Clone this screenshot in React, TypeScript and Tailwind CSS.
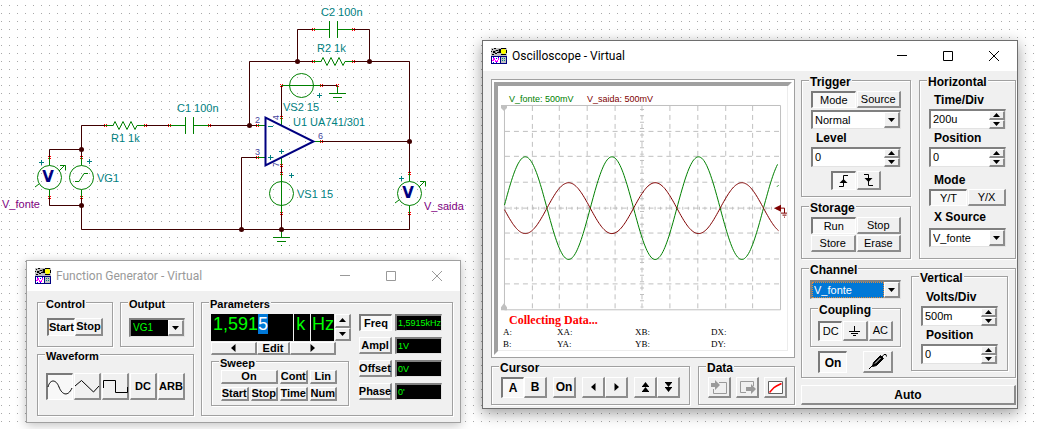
import React, { ReactNode } from 'react';

const raised =
  'bg-[#f0f0f0] border-t border-l border-r-2 border-b-2 border-t-white border-l-white border-r-[#8c8c8c] border-b-[#8c8c8c]';
const pressed =
  'bg-[#f8f8f8] border-t-2 border-l-2 border-r border-b border-t-[#7a7a7a] border-l-[#7a7a7a] border-r-white border-b-white';
const well =
  'border-t-2 border-l-2 border-r border-b border-t-[#808080] border-l-[#808080] border-r-[#e3e3e3] border-b-[#e3e3e3]';

type BtnProps = { children: ReactNode; on?: boolean; className?: string; label?: string };

function Btn({ children, on, className = '', label }: BtnProps) {
  return (
    <button
      type="button"
      aria-label={label}
      aria-pressed={on}
      className={`flex min-w-0 items-center justify-center whitespace-nowrap leading-none text-black ${on ? pressed : raised} ${className}`}
    >
      {children}
    </button>
  );
}

type GroupProps = { title: string; children: ReactNode; className?: string };

function Group({ title, children, className = '' }: GroupProps) {
  return (
    <fieldset
      className={`relative min-w-0 border border-[#a0a0a0] shadow-[1px_1px_0_#fff,inset_1px_1px_0_#fff] ${className}`}
    >
      <legend className="absolute -top-[5px] left-[7px] bg-[#f0f0f0] px-px font-bold leading-[12px]">{title}</legend>
      {children}
    </fieldset>
  );
}

function Arrow({ dir }: { dir: 'up' | 'down' | 'left' | 'right' }) {
  const d = { up: 'M0 5h7L3.5 1z', down: 'M0 1h7L3.5 5z', left: 'M5.500 0v8L1 4z', right: 'M1.500 0v8L6 4z' }[dir];
  const box = dir === 'up' || dir === 'down' ? '0 0 7 6' : '0 0 7 8';
  return (
    <svg viewBox={box} className={dir === 'up' || dir === 'down' ? 'h-[6px] w-[7px]' : 'h-[8px] w-[7px]'} aria-hidden="true">
      <path d={d} fill="#000" />
    </svg>
  );
}

function Spinner({ name }: { name: string }) {
  return (
    <div className="flex w-4 shrink-0 flex-col">
      <Btn label={`${name} up`} className="flex-1"><Arrow dir="up" /></Btn>
      <Btn label={`${name} down`} className="flex-1"><Arrow dir="down" /></Btn>
    </div>
  );
}

function NumberField({ id, value, name }: { id: string; value: string; name: string }) {
  return (
    <div className={`flex h-5 min-w-0 ${well}`}>
      <input id={id} defaultValue={value} className="w-full min-w-0 flex-1 bg-white px-[2px] text-[11px] text-black outline-none" />
      <Spinner name={name} />
    </div>
  );
}

type ComboProps = { id: string; value: string; label?: string; tone?: 'plain' | 'selected' | 'dark'; className?: string };

function Combo({ id, value, label, tone = 'plain', className = '' }: ComboProps) {
  const tones = {
    plain: 'bg-white text-[11px] text-black',
    selected: 'bg-[#0078d7] text-[11px] text-white outline-1 outline-dotted outline-[#e08a3c] -outline-offset-1',
    dark: 'bg-black text-[10px] text-[#00ff00]',
  };
  return (
    <div className={`flex h-[19px] min-w-0 ${well} ${tone === 'dark' ? 'bg-black' : 'bg-white'} ${className}`}>
      <select id={id} aria-label={label} className={`w-full min-w-0 flex-1 appearance-none px-[2px] leading-none ${tones[tone]}`}>
        <option>{value}</option>
      </select>
      <span className={`pointer-events-none flex w-4 shrink-0 items-center justify-center ${raised}`}>
        <Arrow dir="down" />
      </span>
    </div>
  );
}

function AppIcon() {
  return (
    <svg viewBox="0 0 16 16" className="h-4 w-4 shrink-0" shapeRendering="crispEdges" aria-hidden="true">
      <path fill="#c0c0c0" d="M0 0h16v8H0z" />
      <path fill="#000" d="M1 1h1v1H1zM3 0h2v1H3zM0 3h1v1H0zM2 3h2v2H2zM5 2h2v1H5zM6 4h2v1H6zM8 1h2v4H8zM4 5h2v1H4zM10 6h5v1h-5zM10 0h5v1h-5zM15 2h1v3h-1zM1 6h2v1H1z" />
      <path fill="#808080" d="M4 2h1v3H4zM7 1h1v3H7z" />
      <path fill="#ffff00" d="M11 1h3v1h1v3h-1v1h-3V5h-1V2h1z" />
      <path fill="#000080" d="M0 8h16v8H0z" />
      <path fill="#fff" d="M1 9h8v6H1z" />
      <path fill="#ff00ff" d="M1 12h1v-2h2v2h1v1h1v-1h1v-2h1v2H7v2H4v-2H3v1H1z" />
      <path fill="#0000ff" d="M2 9h1v1H2zM5 10h1v1H5zM7 9h1v1H7zM2 14h1v1H2zM5 14h1v1H5z" />
      <path fill="#c0c0c0" d="M10 9h5v6h-5z" />
      <path fill="#008080" d="M11 10h1v1h-1zM13 10h1v1h-1zM11 12h1v1h-1zM13 12h1v1h-1z" />
    </svg>
  );
}

function TitleBar({ title, active }: { title: string; active: boolean }) {
  return (
    <header className={`flex h-[30px] items-center bg-white pl-2 ${active ? 'text-black' : 'text-[#999]'}`}>
      <AppIcon />
      <h2 className="ml-[5px] flex-1 font-[Roboto,'Noto_Sans',sans-serif] text-[12px] leading-4">{title}</h2>
      <div className="flex">
        {[
          ['Minimize', 'M0 4.500h10'],
          ['Maximize', 'M.5.500h9v9h-9z'],
          ['Close', 'M0 0l10 10M10 0L0 10'],
        ].map(([name, d]) => (
          <button key={name} type="button" aria-label={name} className="flex h-[30px] w-[46px] items-center justify-center">
            <svg viewBox="0 0 10 10" className="h-[10px] w-[10px]" fill="none" stroke="currentColor"><path d={d} /></svg>
          </button>
        ))}
      </div>
    </header>
  );
}

const WAVES = [
  ['Sine', 'M1 12C3 4 9 4 12 12s9 10 13 1'],
  ['Triangle', 'M1 12L7.500 6.500l12 11.500 5.500-6'],
  ['Square', 'M1.500 14V6.500h12v12h12V13'],
];

function FunctionGenerator() {
  return (
    <section className="absolute left-[26px] top-[260px] w-[435px] border border-[#a0a0a0] bg-[#f0f0f0] text-[11px] shadow-[0_2px_10px_rgba(0,0,0,0.25)]">
      <TitleBar title="Function Generator - Virtual" active={false} />
      <div className="flex gap-[7px] pb-[6px] pl-[10px] pr-[7px] pt-[11px]">
        <div className="flex w-[157px] shrink-0 flex-col gap-[7px]">
          <div className="flex gap-[7px]">
            <Group title="Control" className="flex h-[45px] flex-1 px-[9px] pt-[15px]">
              <Btn on className="h-[18px] flex-1 font-bold">Start</Btn>
              <Btn className="h-[18px] flex-1 font-bold">Stop</Btn>
            </Group>
            <Group title="Output" className="flex-1 px-[8px] pt-[15px]">
              <Combo id="output" label="Output" value="VG1" tone="dark" />
            </Group>
          </div>
          <Group title="Waveform" className="flex flex-1 gap-px px-2 pt-[18px]">
            {WAVES.map(([name, d], i) => (
              <Btn key={name} label={name} on={i === 0} className="h-[27px] flex-1">
                <svg viewBox="0 0 26 24" className="h-6 w-[26px] shrink-0" fill="none" stroke="#000"><path d={d} /></svg>
              </Btn>
            ))}
            <Btn className="h-[27px] flex-1 font-bold">DC</Btn>
            <Btn className="h-[27px] flex-1 font-bold">ARB</Btn>
          </Group>
        </div>
        <Group title="Parameters" className="flex flex-1 justify-between pb-[9px] pl-[9px] pr-[10px] pt-[11px]">
          <div className="w-[140px]">
            <div className="flex h-[27px] gap-px text-[18px] leading-[20px] text-[#00ff00]">
              <div className="w-[84px] bg-black pl-[2px]">1,591<span className="inline-block bg-[#0078d7] text-white">5</span></div>
              <div className="w-4 bg-black pl-[2px]">k</div>
              <div className="w-[23px] bg-black pl-px">Hz</div>
              <Spinner name="Frequency" />
            </div>
            <div className="mt-px flex h-[13px] w-[125px]">
              <Btn label="Previous digit" className="flex-1"><Arrow dir="left" /></Btn>
              <Btn className="w-[33px] font-bold">Edit</Btn>
              <Btn label="Next digit" className="flex-1"><Arrow dir="right" /></Btn>
            </div>
            <Group title="Sweep" className="mt-[6px] grid w-[138px] grid-cols-4 gap-x-[2px] gap-y-[3px] pb-[4px] pl-[9px] pr-[11px] pt-2 font-bold">
              <Btn className="col-span-2 h-[14px]">On</Btn>
              <Btn className="h-[14px]">Cont</Btn>
              <Btn className="h-[14px]">Lin</Btn>
              <Btn className="h-[14px]">Start</Btn>
              <Btn className="h-[14px]">Stop</Btn>
              <Btn className="h-[14px]">Time</Btn>
              <Btn className="h-[14px]">Num</Btn>
            </Group>
          </div>
          <div className="flex flex-col gap-[6px]">
            {[
              ['Freq', '1,5915kHz'],
              ['Ampl', '1V'],
              ['Offset', '0V'],
              ['Phase', "0'"],
            ].map(([name, value], i) => (
              <div key={name} className="flex gap-[3px]">
                <Btn on={i === 0} className="h-[17px] w-[33px] font-bold">{name}</Btn>
                <output className={`h-[17px] w-[47px] bg-black pl-px text-[9px] leading-[14px] text-[#00ff00] ${well}`}>{value}</output>
              </div>
            ))}
          </div>
        </Group>
      </div>
    </section>
  );
}

const COLS = [532.5, 559.5, 587.5, 615.5, 642.5, 670.5, 698.5, 726.5, 753.5];
const ROWS = [131.5, 156.5, 182.5, 208.5, 233.5, 259.5, 284.5];

function wave(amplitude: number, end: number) {
  const points: string[] = [];
  for (let x = 504.5; x <= end; x += 1) {
    points.push(`${x},${(208.5 - amplitude * Math.sin(((x - 503.7) / 86.9) * 2 * Math.PI)).toFixed(1)}`);
  }
  return points.join(' ');
}

function Plot() {
  return (
    <svg viewBox="498 104 290 208" className="block w-full" fill="none">
      <g stroke="#c0c0c0">
        <path strokeDasharray="5 4" d={COLS.map((x) => `M${x} 106V310`).join('') + ROWS.map((y) => `M505 ${y}H781`).join('')} />
        <path d="M504.500 105.500h277v205h-277z" />
        <path strokeWidth="3" strokeDasharray="1 4.560" d="M505 208.500H781" />
        <path strokeWidth="4" strokeDasharray="1 5.400" d="M642.500 109V308" />
      </g>
      <path fill="#c0c0c0" d="M501 105h6v3l-3 3-3-3zM501 311h6v-3l-3-4-3 4z" />
      <path stroke="#008000" d="M778 187l1.500-1.500" />
      <polyline stroke="#008000" points={wave(51.5, 779)} />
      <polyline stroke="#800000" points={wave(-25.5, 780)} />
      <path fill="#800000" d="M775 208.500l7-3.500v7z" />
      <path stroke="#800000" d="M781 208.500h4.500v5M782 213.500h7M783.500 215.500h4M785 217.500h1" />
    </svg>
  );
}

function Screen() {
  return (
    <div className="border border-[#a0a0a0] bg-white p-[2px]">
      <div className="border-4 border-b-white border-l-[#a0a0a0] border-r-white border-t-[#a0a0a0]">
        <div className="border-b border-r border-[#ececec] pt-2">
          <p className="flex gap-[7px] pl-[11px] text-[9px] leading-[10px]">
            <span className="w-[71px] text-[#008000]">V_fonte: 500mV</span>
            <span className="text-[#800000]">V_saida: 500mV</span>
          </p>
          <Plot />
          <p className="mt-[3px] pl-[11px] font-['Liberation_Serif',serif] text-[12px] font-bold leading-[12px] text-[#f00]">Collecting Data...</p>
          <dl className="grid grid-cols-[54px_78px_76px_1fr] pl-[5px] font-['Liberation_Serif',serif] text-[9px] leading-[12px]">
            {['A:', 'XA:', 'XB:', 'DX:', 'B:', 'YA:', 'YB:', 'DY:'].map((t) => (
              <dt key={t}>{t}</dt>
            ))}
          </dl>
        </div>
      </div>
    </div>
  );
}

function Double({ flip }: { flip?: boolean }) {
  return (
    <svg viewBox="0 0 9 10" className={`h-[10px] w-[9px] ${flip ? 'rotate-180' : ''}`} aria-hidden="true">
      <path d="M1 4.500L4.500 0 8 4.500zM1 9.500L4.500 5 8 9.500zM1 4h7v1H1zM1 9h7v1H1z" />
    </svg>
  );
}

const label = 'block pl-[5px] text-[12px] font-bold leading-[14px]';

function Oscilloscope() {
  return (
    <section className="absolute left-[482px] top-[40px] w-[536px] border border-[#6e6e6e] bg-[#f0f0f0] text-[12px] shadow-[0_4px_14px_rgba(0,0,0,0.4)]">
      <TitleBar title="Oscilloscope - Virtual" active />
      <div className="flex gap-[6px] pb-[3px] pl-2 pr-px pt-2">
        <div className="flex w-[304px] shrink-0 flex-col gap-2">
          <Screen />
          <div className="flex gap-2">
            <Group title="Cursor" className="flex w-[199px] gap-[6px] pb-[6px] pl-[9px] pt-[10px] font-bold">
              <div className="flex">
                <Btn on className="h-[21px] w-[23px]">A</Btn>
                <Btn className="h-[21px] w-[23px]">B</Btn>
              </div>
              <Btn className="h-[21px] w-[23px]">On</Btn>
              <div className="flex">
                <Btn label="Left" className="h-[21px] w-[23px]"><Arrow dir="left" /></Btn>
                <Btn label="Right" className="h-[21px] w-[23px]"><Arrow dir="right" /></Btn>
              </div>
              <div className="flex">
                <Btn label="Curve up" className="h-[21px] w-[23px]"><Double /></Btn>
                <Btn label="Curve down" className="h-[21px] w-[23px]"><Double flip /></Btn>
              </div>
            </Group>
            <Group title="Data" className="flex flex-1 gap-[5px] pl-[9px] pt-[10px]">
              <Btn label="Import" className="h-[21px] w-[23px]">
                <svg viewBox="0 0 17 15" className="h-[15px] w-[17px] shrink-0" fill="none" stroke="#9a9a9a">
                  <path d="M2.500 9v4.500h13v-11H8" />
                  <path fill="#9a9a9a" stroke="none" d="M0 3h4V0l5 5-5 5V7H0z" />
                </svg>
              </Btn>
              <Btn label="Export" className="h-[21px] w-[23px]">
                <svg viewBox="0 0 17 15" className="h-[15px] w-[17px] shrink-0" fill="none" stroke="#9a9a9a">
                  <path d="M14.500 6V1.500h-13v11H7" />
                  <path fill="#9a9a9a" stroke="none" d="M7 7h5V4l5 5-5 5v-3H7z" />
                </svg>
              </Btn>
              <Btn label="Curve" className="h-[21px] w-[23px]">
                <svg viewBox="0 0 15 13" className="h-[13px] w-[15px] shrink-0" fill="none">
                  <path fill="#fff" stroke="#606060" d="M.5.500h14v12H.5z" />
                  <path stroke="#f00" strokeWidth="1.500" d="M1.500 11.500L6 6.500l2.500-1.500L13.500 2.500" />
                </svg>
              </Btn>
            </Group>
          </div>
        </div>
        <div className="flex min-w-0 flex-1 flex-col pt-px">
          <div className="flex gap-2">
            <div className="flex w-[110px] shrink-0 flex-col gap-[9px]">
              <Group title="Trigger" className="h-[117px] px-[9px] pt-[10px]">
                <div className="grid grid-cols-2 gap-px text-[11px]">
                  <Btn on className="h-[17px]">Mode</Btn>
                  <Btn className="h-[17px]">Source</Btn>
                </div>
                <Combo id="trigger-mode" label="Trigger mode" value="Normal" className="mt-[2px]" />
                <label htmlFor="level" className={`${label} mb-[2px] mt-[2px]`}>Level</label>
                <NumberField id="level" name="Level" value="0" />
                <div className="mt-1 grid grid-cols-2 gap-px px-5">
                  <Btn on label="Rising edge" className="h-[19px]">
                    <svg viewBox="0 0 11 12" className="h-3 w-[11px] shrink-0" fill="none" stroke="#000"><path d="M1 11.500h4.500V.5H10" /><path fill="#000" stroke="none" d="M1.500 8h8L5.500 4z" /></svg>
                  </Btn>
                  <Btn label="Falling edge" className="h-[19px]">
                    <svg viewBox="0 0 11 12" className="h-3 w-[11px] shrink-0" fill="none" stroke="#000"><path d="M1 .5h4.500v11H10" /><path fill="#000" stroke="none" d="M1.500 4h8L5.500 8z" /></svg>
                  </Btn>
                </div>
              </Group>
              <Group title="Storage" className="grid flex-1 grid-cols-2 gap-px px-[9px] pb-[6px] pt-[10px]">
                <Btn on className="h-[17px] text-[11px]">Run</Btn>
                <Btn className="h-[17px] text-[11px]">Stop</Btn>
                <Btn className="h-[17px] text-[11px]">Store</Btn>
                <Btn className="h-[17px] text-[11px]">Erase</Btn>
              </Group>
            </div>
            <Group title="Horizontal" className="flex-1 px-[9px] pt-[12px]">
              <label htmlFor="time-div" className={`${label} mb-[2px]`}>Time/Div</label>
              <NumberField id="time-div" name="Time/Div" value="200u" />
              <label htmlFor="h-position" className={`${label} mb-[2px] mt-[2px]`}>Position</label>
              <NumberField id="h-position" name="Horizontal position" value="0" />
              <p className={`${label} mb-[2px] mt-[6px]`}>Mode</p>
              <div className="grid grid-cols-2 gap-px text-[11px]">
                <Btn on className="h-[17px]">Y/T</Btn>
                <Btn className="h-[17px]">Y/X</Btn>
              </div>
              <label htmlFor="x-source" className={`${label} mb-[4px] mt-[4px]`}>X Source</label>
              <Combo id="x-source" value="V_fonte" />
            </Group>
          </div>
          <Group title="Channel" className="mt-[9px] flex h-[110px] justify-between pl-2 pr-[7px] pt-[7px]">
            <div className="w-[91px] pt-1">
              <Combo id="channel" label="Channel" value="V_fonte" tone="selected" />
              <Group title="Coupling" className="mt-[9px] grid grid-cols-3 gap-px px-[7px] pb-[5px] pt-3">
                <Btn on className="h-5 text-[11px]">DC</Btn>
                <Btn label="Ground" className="h-5">
                  <svg viewBox="0 0 11 10" className="h-[10px] w-[11px] shrink-0" stroke="#000"><path d="M5.500 0v5M0 5.500h11M2 7.500h7M4 9.500h3" /></svg>
                </Btn>
                <Btn className="h-5 text-[11px]">AC</Btn>
              </Group>
              <div className="mt-1 flex justify-between px-2">
                <Btn on className="h-[22px] w-[29px] font-bold">On</Btn>
                <Btn label="Probe" className="h-[22px] w-[30px]">
                  <svg viewBox="0 0 20 17" className="h-[17px] w-5 shrink-0" fill="none" stroke="#000">
                    <path d="M1 16l5-5M14 4l2-2.500h2l.5 2" />
                    <path fill="#000" d="M4.500 13.500l1-4 7-7 3 3-7 7z" />
                    <path stroke="#fff" d="M7 10.500l5.500-5.500" />
                  </svg>
                </Btn>
              </div>
            </div>
            <Group title="Vertical" className="h-[95px] w-[97px] px-[9px] pt-[13px]">
              <label htmlFor="volts-div" className={`${label} mb-[2px]`}>Volts/Div</label>
              <NumberField id="volts-div" name="Volts/Div" value="500m" />
              <label htmlFor="v-position" className={`${label} mb-[2px] mt-[2px]`}>Position</label>
              <NumberField id="v-position" name="Vertical position" value="0" />
            </Group>
          </Group>
          <Btn className="mt-[7px] h-5 font-bold">Auto</Btn>
        </div>
      </div>
    </section>
  );
}

const PINS = [
  [105, 125], [145, 125], [169, 125], [209, 125], [257, 125], [257, 157], [321, 141],
  [313, 29], [353, 29], [313, 61], [353, 61], [281, 85], [321, 85], [337, 85],
  [281, 117], [281, 165], [281, 173], [281, 213], [281, 229],
  [49, 157], [49, 197], [81, 157], [81, 197], [409, 173], [409, 213],
];
const NODES = [[81, 149], [81, 205], [249, 125], [241, 229], [281, 229], [297, 61], [369, 61], [409, 141]];
const PLUS = [[41, 162], [89, 161], [401, 178], [319, 95], [291, 175], [270, 157], [281, 151]];

function Voltmeter({ x, y }: { x: number; y: number }) {
  return (
    <g stroke="#008000" fill="none">
      <circle cx={x + 0.5} cy={y + 0.5} r="12" />
      <path d={`M${x + 0.5} ${y - 20}v8M${x + 0.5} ${y + 12.5}v8M${x - 14} ${y + 10}l4-3M${x + 10} ${y - 6}l6-6M${x + 11} ${y - 11.5}h5.500v5`} />
      <text x={x - 1} y={y + 5} textAnchor="middle" fill="#000080" stroke="none" className="font-['DejaVu_Sans',sans-serif] text-[15px] font-bold">V</text>
    </g>
  );
}

function Circuit() {
  return (
    <svg viewBox="0 0 480 260" width="480" height="260" fill="none" className="block text-[11px]" role="img" aria-label="Circuit diagram">
      <path
        stroke="#400000"
        d="M105 125.500H81.500V157M49.500 157v-7.500h32M49.500 197v8.500h32M81.500 197v32.500h328V213M145 125.500h24M209 125.500h48M249.500 125.500v-64H313M353 61.500h56.500V173M297.500 61.500v-32H313M353 29.500h16.500v32M321 141.500h88M257 157.500h-15.500v72M281.500 117V85.500M321 85.500h16.500M281.500 165v8M281.500 213v16"
      />
      <g stroke="#008000">
        <path d="M105 125.500h8l2-4 4 8 4-8 4 8 4-8 4 8 2-4h8" />
        <path d="M313 61.500h8l2-4 4 8 4-8 4 8 4-8 4 8 2-4h8" />
        <path d="M169 125.500h16.500M185.500 117v17M193.500 117v17M193.500 125.500H209" />
        <path d="M313 29.500h16.500M329.500 21v17M337.500 21v17M337.500 29.500H353" />
        <path d="M257 125.500h8M257 157.500h8M313 141.500h8M281.500 117v9M281.500 157v8M281.500 173v40M281.500 85.500H321" />
        <circle cx="301.5" cy="85.5" r="12" />
        <circle cx="281.5" cy="193.5" r="12" />
        <circle cx="81.5" cy="177.500" r="12" />
        <path d="M81.500 157v8M81.500 190v8M75 181.500h4l5-8h4" />
        <path d="M337.500 86v7M329 93.500h17M333 97.500h9M337 101.500h1M281.500 230v7M273 237.500h17M277 241.500h9M281 245.500h1" />
      </g>
      <Voltmeter x={49} y={177} />
      <Voltmeter x={409} y={193} />
      <path stroke="#000080" strokeWidth="2" d="M265.500 117.500v48l48-24z" />
      <path stroke="#008080" d={PLUS.map(([x, y]) => `M${x - 2} ${y + 0.5}h5M${x + 0.5} ${y - 2}v5`).join('') + 'M268 126.500h5'} />
      <path fill="#f00" d={PINS.map(([x, y]) => [[-1, -1], [1, -1], [-1, 1], [1, 1]].map(([a, b]) => `M${x + a} ${y + b}h1v1h-1z`).join('')).join('')} />
      {NODES.map(([x, y]) => (
        <circle key={`${x}-${y}`} cx={x + 0.5} cy={y + 0.5} r="2.500" fill="#400000" />
      ))}
      <g fill="#008080">
        <text x="177" y="112">C1 100n</text>
        <text x="111" y="142">R1 1k</text>
        <text x="97" y="182">VG1</text>
        <text x="321" y="16">C2 100n</text>
        <text x="317" y="52">R2 1k</text>
        <text x="283" y="111">VS2 15</text>
        <text x="293" y="126">U1 UA741/301</text>
        <text x="297" y="198">VS1 15</text>
      </g>
      <g fill="#800080">
        <text x="2" y="208">V_fonte</text>
        <text x="424" y="210">V_saida</text>
      </g>
      <g fill="#4848a0" className="text-[9px]">
        <text x="255" y="123">2</text>
        <text x="255" y="155">3</text>
        <text x="318" y="139">6</text>
        <text transform="translate(279 120) rotate(-90)">4</text>
        <text transform="translate(279 167) rotate(-90)">7</text>
      </g>
    </svg>
  );
}

export default function App() {
  return (
    <main className="relative min-h-screen overflow-hidden bg-white bg-[linear-gradient(#fff_7px,transparent_7px),linear-gradient(90deg,#a8a8a8_1px,#fff_1px)] bg-[size:8px_8px] bg-[position:1px_6px] font-['Liberation_Sans',Arial,sans-serif] text-black">
      <Circuit />
      <FunctionGenerator />
      <Oscilloscope />
    </main>
  );
}
